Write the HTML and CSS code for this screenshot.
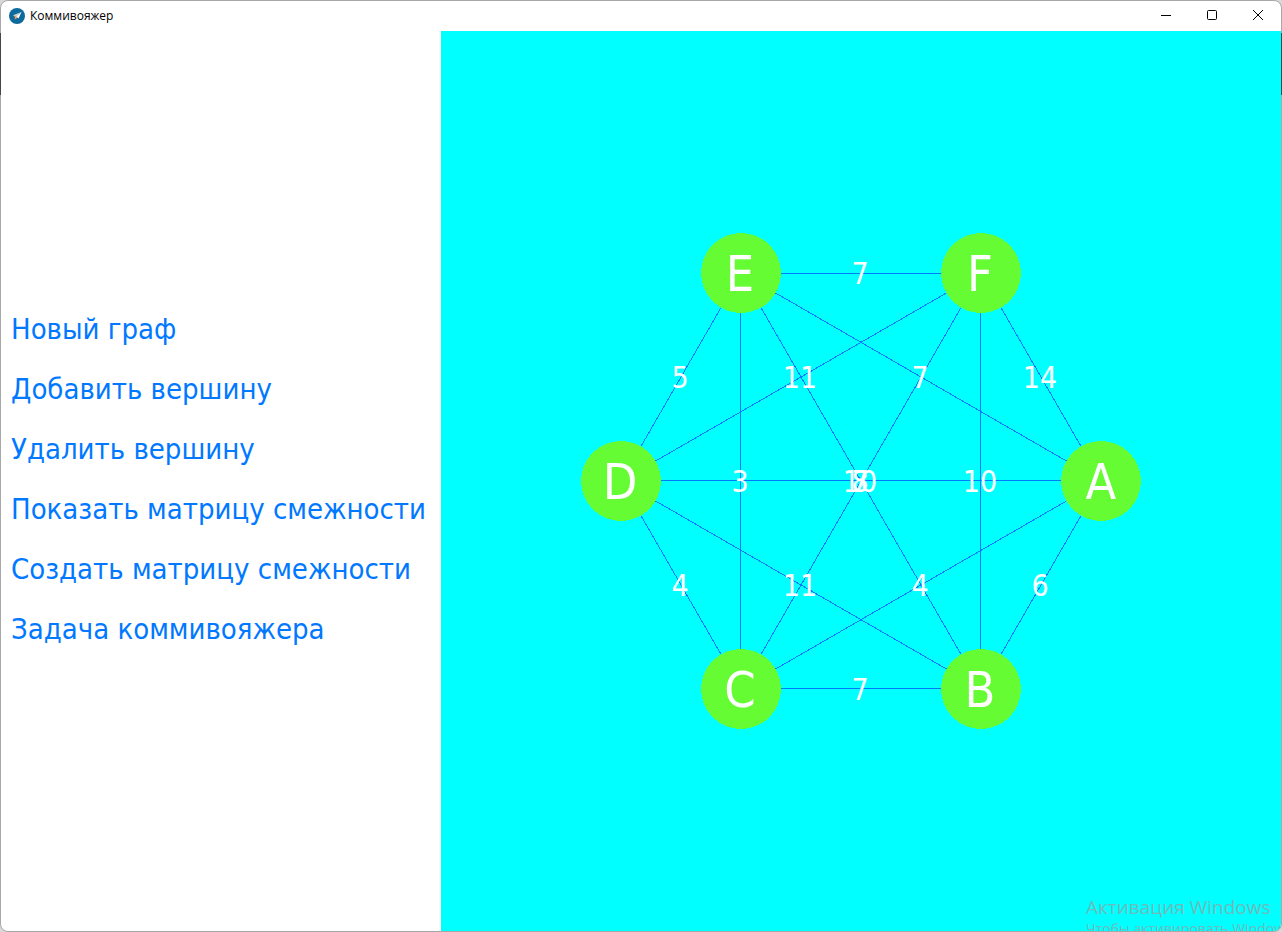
FILE: index.html
```html
<!DOCTYPE html>
<html lang="ru">
<head>
<meta charset="utf-8">
<title>Коммивояжер</title>
<link rel="stylesheet" href="styles.css">
</head>
<body>
<div class="window">
  <header class="titlebar">
    <svg class="app-icon" viewBox="0 0 16 16" aria-hidden="true">
      <circle cx="8" cy="8" r="8" fill="#0d6a9c"/>
      <path d="M12.5 4 4 7.2 6.5 8.8Z" fill="#c3d0d8"/>
      <path d="M12.5 4 6.5 8.8 9.6 10.2Z" fill="#ffffff"/>
      <path d="M4.4 7.4 7.6 8.2 8.2 10 5.6 11.6 6 9Z" fill="#f09a5c"/>
    </svg>
    <h1 class="title">Коммивояжер</h1>
    <div class="controls">
      <button class="control" type="button" aria-label="Свернуть"><svg class="glyph" viewBox="0 0 10 10"><path d="M0 5.5H10"/></svg></button>
      <button class="control" type="button" aria-label="Развернуть"><svg class="glyph" viewBox="0 0 10 10"><rect x=".5" y=".5" width="9" height="9" rx="1"/></svg></button>
      <button class="control" type="button" aria-label="Закрыть"><svg class="glyph" viewBox="0 0 10 10"><path d="M0 0 10 10M10 0 0 10"/></svg></button>
    </div>
  </header>
  <main class="content">
    <nav class="menu">
      <button class="menu-item" type="button">Новый граф</button>
      <button class="menu-item" type="button">Добавить вершину</button>
      <button class="menu-item" type="button">Удалить вершину</button>
      <button class="menu-item" type="button">Показать матрицу смежности</button>
      <button class="menu-item" type="button">Создать матрицу смежности</button>
      <button class="menu-item" type="button">Задача коммивояжера</button>
    </nav>
    <section class="canvas">
      <svg class="graph" viewBox="0 0 840 900" role="img" aria-label="Граф">
        <g class="edges">
          <path d="M300 242H540M300 657H540M180 449H660M299 242V658M539 242V658"/>
          <path d="M300 242 180 450 300 658M540 242 660 450 540 658"/>
          <path d="M300 242 660 450 300 658M540 242 180 450 540 658"/>
          <path d="M300 242 540 658M540 242 300 658"/>
        </g>
        <g class="nodes">
          <circle cx="660" cy="450" r="40"/>
          <circle cx="540" cy="658" r="40"/>
          <circle cx="300" cy="658" r="40"/>
          <circle cx="180" cy="450" r="40"/>
          <circle cx="300" cy="242" r="40"/>
          <circle cx="540" cy="242" r="40"/>
        </g>
        <g class="names">
          <text x="660" y="468">A</text>
          <text x="539" y="676">B</text>
          <text x="299" y="676">C</text>
          <text x="179" y="468">D</text>
          <text x="299" y="260">E</text>
          <text x="539" y="260">F</text>
        </g>
        <g class="weights">
          <text x="419" y="253">7</text>
          <text x="239" y="357">5</text>
          <text x="359" y="357">11</text>
          <text x="479" y="357">7</text>
          <text x="599" y="357">14</text>
          <text x="299" y="461">3</text>
          <text x="419" y="461">10</text>
          <text x="419" y="461">8</text>
          <text x="419" y="461">7</text>
          <text x="539" y="461">10</text>
          <text x="239" y="565">4</text>
          <text x="359" y="565">11</text>
          <text x="479" y="565">4</text>
          <text x="599" y="565">6</text>
          <text x="419" y="669">7</text>
        </g>
      </svg>
      <div class="watermark">
        <p class="watermark-title">Активация Windows</p>
        <p class="watermark-text">Чтобы активировать Windows</p>
      </div>
    </section>
  </main>
</div>
</body>
</html>
```

FILE: styles.css
```css
* {
  box-sizing: border-box;
}

body {
  position: relative;
  margin: 0;
  background: #d8d8d8;
}

/* Dark strip of the window behind, seen at both sides */
body::after {
  content: "";
  position: absolute;
  top: 33px;
  left: 0;
  right: 0;
  height: 62px;
  border: solid #44464c;
  border-width: 0 1px;
  pointer-events: none;
}

.window {
  display: flex;
  flex-direction: column;
  height: 100vh;
  overflow: hidden;
  border: 1px solid #a8a8a8;
  border-radius: 8px;
  background: #fff;
}

.titlebar {
  display: flex;
  align-items: center;
  flex: none;
  height: 30px;
  padding-left: 8px;
}

.app-icon {
  width: 16px;
  height: 16px;
}

.title {
  flex: 1;
  margin: 0 0 0 5px;
  font: 400 12px/16px "Open Sans", "Noto Sans", sans-serif;
  color: #000;
}

.controls {
  display: flex;
  height: 28px;
  align-self: flex-start;
}

.control {
  display: grid;
  place-items: center;
  width: 46px;
  padding: 0;
  border: 0;
  background: none;
}

.glyph {
  width: 10px;
  height: 10px;
  fill: none;
  stroke: #000;
  stroke-width: 1;
}

.content {
  display: flex;
  flex: 1;
  min-height: 0;
}

.menu {
  display: flex;
  flex-direction: column;
  justify-content: center;
  flex: none;
  width: 440px;
  padding-bottom: 4px;
}

.menu-item {
  height: 60px;
  padding: 0 10px;
  border: 0;
  background: none;
  color: #0078ff;
  font: 400 29px/36px "DejaVu Sans Condensed", "DejaVu Sans", sans-serif;
  text-align: left;
  white-space: nowrap;
}

.canvas {
  position: relative;
  flex: 1;
  min-width: 0;
  overflow: hidden;
  background: #0ff;
}

.graph {
  display: block;
  width: 100%;
  height: 100%;
}

.edges {
  fill: none;
  stroke: #0078ff;
  stroke-width: 1;
  shape-rendering: crispEdges;
}

.nodes {
  fill: #66fc33;
  shape-rendering: crispEdges;
}

.names,
.weights {
  fill: #fff;
  font-family: "DejaVu Sans Condensed", "DejaVu Sans", sans-serif;
  text-anchor: middle;
}

.names {
  font-size: 50px;
}

.weights {
  font-size: 30px;
}

.watermark {
  position: absolute;
  right: 0;
  bottom: -8px;
  width: 195px;
  color: #6cbcbc;
  font-family: "Open Sans", "Noto Sans", sans-serif;
  white-space: nowrap;
}

.watermark-title,
.watermark-text {
  margin: 0;
}

.watermark-title {
  font-size: 19px;
  line-height: 24px;
}

.watermark-text {
  font-size: 14px;
  line-height: 20px;
}
```
